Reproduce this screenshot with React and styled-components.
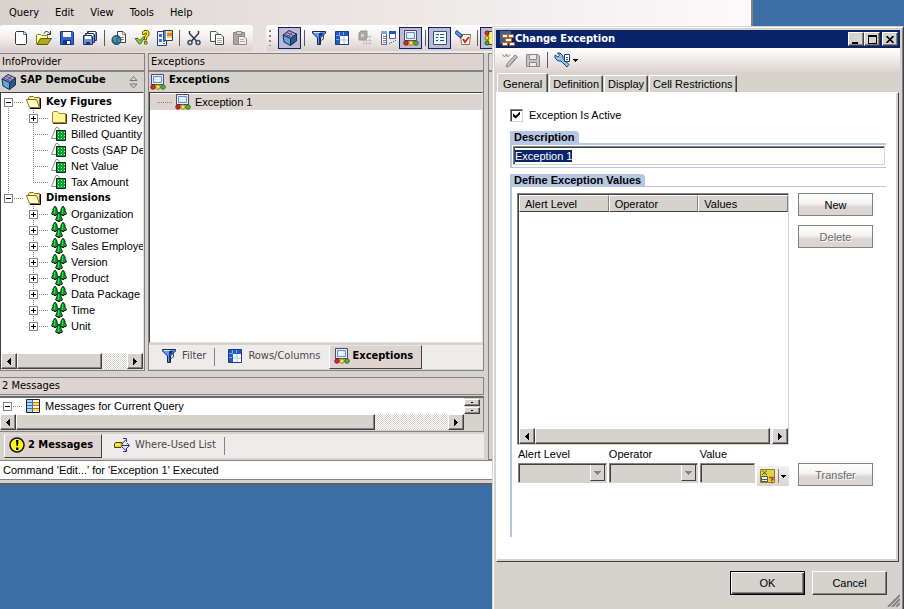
import React, { useEffect, useRef } from 'react';
import styled, { createGlobalStyle, css } from 'styled-components';

const face = '#d6d3ce';
const tint = '#ddd4d1';
const navy = '#0a246a';
const groupBlue = '#b5c7e3';
const sans = '"Liberation Sans", Arial, sans-serif';
const tahoma = '"DejaVu Sans Condensed", "DejaVu Sans", sans-serif';

const GlobalStyle = createGlobalStyle`
  * {
    box-sizing: border-box;
  }

  body {
    margin: 0;
    overflow: hidden;
    background: #3a6ea5;
    color: #000;
    font: 11px/14px ${sans};
  }

  button, input, select {
    margin: 0;
    padding: 0;
    border: 0;
    border-radius: 0;
    background: none;
    color: inherit;
    font: inherit;
  }

  ul {
    margin: 0;
    padding: 0;
    list-style: none;
  }

  svg {
    display: block;
    flex: none;
  }
`;

const raised = css`
  border: 1px solid;
  border-color: #fff #404040 #404040 #fff;
  box-shadow: inset -1px -1px 0 #848284;
`;

const sunken = css`
  border: 1px solid;
  border-color: #848284 #d6d3ce #d6d3ce #848284;
  box-shadow: inset 1px 1px 0 #404040;
`;

const Desktop = styled.div`
  position: relative;
  height: 100vh;
  overflow: hidden;
`;

const MainWindow = styled.div`
  position: absolute;
  top: 0;
  left: 0;
  right: 151px;
  height: calc(100vh - 124px);
  display: flex;
  flex-direction: column;
  background: ${face};
  border-right: 2px solid #848284;
  border-bottom: 2px solid #606060;
`;

const Bars = styled.div`
  background: linear-gradient(to right, #d9d2ce, #fdf9fb 98%);
  padding-bottom: 2px;
`;

const MenuBar = styled.div`
  display: flex;
  gap: 16px;
  padding: 6px 9px 5px;
`;

const MenuButton = styled.button`
  font: 11px/14px ${tahoma};
`;

const ToolRow = styled.div`
  display: flex;
  gap: 13px;
`;

const Strip = styled.div`
  display: flex;
  align-items: center;
  height: 26px;
  padding: 0 2px 0 ${props => (props.$grip ? 0 : 9)}px;
  flex: ${props => (props.$grow ? 1 : 'none')};
  border-radius: 3px;
  background: linear-gradient(to bottom, #fff, #f4f0f0 45%, #d8d0cd);
`;

const Grip = styled.span`
  width: 2px;
  height: 16px;
  margin: 0 7px 0 3px;
  background: repeating-linear-gradient(to bottom, #8a8688 0 2px, transparent 2px 5px);
`;

const ToolButton = styled.button`
  display: flex;
  align-items: center;
  justify-content: center;
  width: 23px;
  height: 22px;
  border: 1px solid ${props => (props.$pressed ? navy : 'transparent')};
  background: ${props => (props.$pressed ? '#bdbad4' : 'none')};
`;

const ToolSeparator = styled.span`
  width: 1px;
  height: 16px;
  margin: 0 2px 0 3px;
  background: #5c5a5c;
`;

const Workspace = styled.div`
  display: flex;
  flex: 1;
  gap: 4px;
  min-height: 0;
`;

const LeftSide = styled.div`
  display: flex;
  flex-direction: column;
  flex: 0 0 484px;
  min-width: 0;
`;

const Panels = styled.div`
  display: flex;
  flex: 1;
  gap: 3px;
  min-height: 0;
`;

const Panel = styled.section`
  display: flex;
  flex-direction: column;
  flex: ${props => (props.$narrow ? '0 0 145px' : 1)};
  min-width: 0;
`;

const PanelCaption = styled.div`
  height: 18px;
  padding: 1px 2px;
  border: 1px solid #848284;
  border-left-width: ${props => (props.$flush ? 0 : 1)}px;
  background: ${tint};
  font: 11px/14px ${tahoma};
`;

const PanelFrame = styled.div`
  display: flex;
  flex-direction: column;
  flex: 1;
  min-height: 0;
  border: 1px solid #848284;
  border-left-width: ${props => (props.$flush ? 0 : 1)}px;
`;

const PanelTitle = styled.h2`
  display: flex;
  align-items: center;
  gap: 3px;
  height: 20px;
  margin: 0;
  padding: 0 6px 0 1px;
  font: bold 11px/14px ${tahoma};

  span {
    flex: 1;
    padding-bottom: 4px;
  }
`;

const Well = styled.div`
  display: flex;
  flex-direction: column;
  flex: 1;
  min-height: 0;
  overflow: hidden;
  background: #fff;
  border: 1px solid;
  border-color: #404040 #e4e1dc #e4e1dc #404040;
`;

const Tree = styled.ul`
  flex: 1;
  overflow: hidden;
  padding-top: 1px;
`;

const TreeRow = styled.li`
  display: flex;
  align-items: center;
  height: 16px;
  padding-left: 3px;
  white-space: nowrap;
  background: ${props => (props.$selected ? tint : 'none')};
`;

const dotsDown = 'repeating-linear-gradient(to bottom, #848284 0 1px, transparent 1px 2px)';
const dotsAcross = 'repeating-linear-gradient(to right, #848284 0 1px, transparent 1px 2px)';

const verticalSize = {
  all: '1px 16px', top: '1px 8px', bottom: '1px 8px', none: '0 0',
};

const Rail = styled.span`
  flex: none;
  width: 25px;
  height: 16px;
  background: ${props => (props.$line ? dotsDown : 'none')} 4px 0 / 1px 16px no-repeat;
`;

const Branch = styled.span`
  display: flex;
  align-items: center;
  flex: none;
  width: 22px;
  height: 16px;
  background-image: ${dotsDown}, ${dotsAcross};
  background-size: ${props => verticalSize[props.$line || 'all']}, 16px 1px;
  background-position: 4px ${props => (props.$line === 'bottom' ? 8 : 0)}px, 4px 8px;
  background-repeat: no-repeat;
`;

const Expander = styled.button`
  display: block;
  width: 9px;
  height: 9px;
  border: 1px solid #848284;
  background:
    linear-gradient(#000, #000) center / 5px 1px no-repeat,
    linear-gradient(#000, #000) center / ${props => (props.$open ? 0 : 1)}px 5px no-repeat,
    #fff;
`;

const TreeText = styled.span`
  margin-left: 4px;
  font: ${props => (props.$strong ? `bold 11px/14px ${tahoma}` : `11px/14px ${sans}`)};
`;

const ScrollTrack = styled.div`
  display: flex;
  flex: none;
  height: 16px;
  background: repeating-conic-gradient(#fff 0 25%, #d6d3ce 0 50%) 0 0 / 2px 2px;
`;

const ScrollButton = styled.button`
  display: flex;
  align-items: center;
  justify-content: center;
  width: 16px;
  height: 16px;
  background: ${face};
  ${raised}
`;

const ScrollThumb = styled.div`
  flex: ${props => props.$size};
  background: ${face};
  ${raised}
`;

const ScrollGap = styled.div`
  flex: ${props => props.$size};
`;

const TabStrip = styled.div`
  display: flex;
  align-items: center;
  height: 24px;
  background: #eeebea;
  margin: ${props => (props.$low ? '2px 0 0 4px' : '2px 0 1px')};
`;

const PanelTab = styled.button`
  display: flex;
  align-items: center;
  gap: ${props => (props.$active ? 3 : 5)}px;
  height: 24px;
  padding: 0 8px 2px ${props => (props.$active ? 4 : 12)}px;
  color: ${props => (props.$active ? '#000' : '#4a4648')};
  font: ${props => (props.$active ? 'bold ' : '')}11px/14px ${tahoma};
  ${props => props.$active && css`
    background: ${tint};
    border: 1px solid;
    border-color: #e9e5e3 #404040 #404040 #fff;
  `}
`;

const TabDivider = styled.span`
  width: 1px;
  height: 18px;
  background: #848284;
`;

const Messages = styled.section`
  margin-top: 6px;
  padding-bottom: 2px;
`;

const MessageWell = styled.div`
  display: flex;
  margin-top: 1px;
  padding: 0 3px 1px 0;
  border: 1px solid #848284;
  border-left: 0;
  border-top: 2px solid #6a686a;
`;

const MessageList = styled.div`
  flex: 1;
  background: #fff;
`;

const Spinner = styled.div`
  display: flex;
  flex-direction: column;
  gap: 1px;
  width: 16px;
  padding-top: 1px;

  button {
    height: 7px;
    background: radial-gradient(#000 1px, transparent 1px), ${face};
    ${raised}
  }
`;

const StatusBar = styled.div`
  height: 20px;
  margin-bottom: 3px;
  padding: 2px 3px;
  border-top: 1px solid #848284;
  border-bottom: 1px solid #848284;
  background: #fff;
  font: 11px/14px ${sans};
`;

const Dialog = styled.div`
  position: absolute;
  top: 26px;
  left: 492px;
  right: 0;
  bottom: 0;
  display: flex;
  flex-direction: column;
  padding: 2px 3px 2px 2px;
  background: ${face};
  border: 1px solid ${face};
  border-right: 1px solid #404040;
  border-bottom: 0;
  box-shadow: inset 1px 1px 0 #fff, inset -1px 0 0 #848284;
`;

const TitleBar = styled.div`
  display: flex;
  align-items: center;
  height: 18px;
  margin: 1px 0 0 1px;
  padding: 0 2px 0 3px;
  background: ${navy};
  color: #fff;
  font: bold 11px/14px ${tahoma};
`;

const DialogTitle = styled.h1`
  flex: 1;
  margin: 0;
  font: inherit;
`;

const CaptionButton = styled.button`
  display: flex;
  align-items: center;
  justify-content: center;
  width: 16px;
  height: 14px;
  margin-left: ${props => (props.$apart ? 2 : 0)}px;
  background: ${face};
  ${raised}
`;

const DialogTools = styled.div`
  display: flex;
  align-items: center;
  height: 24px;
  padding-left: 3px;
  background: linear-gradient(to bottom, #fff, #f2eeee 40%, #dcd4d1);
`;

const DialogTabs = styled.div`
  display: flex;
  align-items: flex-end;
  gap: 1px;
  height: 20px;
  margin-left: 2px;
`;

const DialogTab = styled.button`
  height: ${props => (props.$active ? 20 : 17)}px;
  margin-bottom: ${props => (props.$active ? -1 : 0)}px;
  padding: 0 ${props => (props.$active ? 5 : 3)}px;
  border: 1px solid;
  border-color: #fff #404040 transparent #fff;
  border-bottom: 0;
  border-radius: 2px 2px 0 0;
  box-shadow: inset -1px 0 0 #848284;
  background: ${face};
`;

const Page = styled.div`
  flex: 1;
  margin: 0 1px;
  padding: 14px 12px 24px 13px;
  border: 1px solid;
  border-color: #fff #404040 #404040 #fff;
  box-shadow: inset -2px -2px 0 ${face};
  background: #fff;
  display: flex;
  flex-direction: column;
`;

const CheckLabel = styled.label`
  display: flex;
  align-items: center;
  gap: 6px;
  height: 16px;
`;

const Checkbox = styled.input`
  appearance: none;
  width: 13px;
  height: 13px;
  background: #fff;
  ${sunken}

  &:checked::before {
    content: '';
    display: block;
    width: 7px;
    height: 7px;
    margin: 2px;
    background: #000;
    clip-path: polygon(0 25%, 38% 62%, 100% 0, 100% 42%, 38% 100%, 0 68%);
  }
`;

const Group = styled.section`
  margin-top: ${props => (props.$first ? 8 : 6)}px;
  flex: ${props => (props.$grow ? 1 : 'none')};
  border-left: 2px solid ${groupBlue};
  border-bottom: ${props => (props.$grow ? 0 : 1)}px solid ${groupBlue};
`;

const GroupTitle = styled.h2`
  display: flex;
  margin: 0;
  border-bottom: ${props => (props.$thin ? 1 : 2)}px solid ${groupBlue};
  font: bold 11px/12px ${sans};

  label, span {
    padding: 0 4px 0 2px;
    border-radius: 0 4px 0 0;
    background: ${groupBlue};
  }
`;

const TextInput = styled.input`
  display: block;
  width: calc(100% - 2px);
  height: 19px;
  margin: 1px 0 2px 1px;
  padding: 0 1px;
  background: #fff;
  outline: none;
  ${sunken}

  &::selection {
    background: ${navy};
    color: #fff;
  }
`;

const ValuesLayout = styled.div`
  display: grid;
  grid-template-columns: minmax(0, 1fr) 75px;
  column-gap: 9px;
  padding: 6px 13px 0 5px;
`;

const ValuesBox = styled.div`
  display: flex;
  flex-direction: column;
  height: 252px;
  background: #fff;
  ${sunken}
  padding: 1px 0 0 1px;
`;

const ValuesTable = styled.table`
  width: 100%;
  table-layout: fixed;
  border-spacing: 0;

  th {
    height: 17px;
    padding: 0 5px;
    border: 1px solid;
    border-color: #fff #848284 #404040 #fff;
    background: ${face};
    font-weight: normal;
    text-align: left;
  }
`;

const Filler = styled.div`
  flex: 1;
`;

const SideButtons = styled.div`
  display: flex;
  flex-direction: column;
  gap: 9px;
`;

const FlatButton = styled.button`
  height: 23px;
  border: 1px solid #848284;
  background: linear-gradient(to bottom, #fff, #f6f2f2 45%, #ded6d3 60%, #ddd4d1);

  &:disabled {
    color: #6c686a;
    text-shadow: 1px 1px 0 #fff;
  }
`;

const Fields = styled.div`
  display: flex;
  gap: 2px;
  padding: 2px 0 0 1px;
`;

const Field = styled.div`
  display: flex;
  flex-direction: column;
  gap: 2px;
  flex: ${props => props.$size};
  min-width: 0;
`;

const DisabledBox = styled.span`
  display: flex;
  height: 20px;
  padding: 1px;
  background: ${face};
  ${sunken}

  select, input {
    appearance: none;
    flex: 1;
    min-width: 0;
    width: 0;
  }
`;

const DropCap = styled.span`
  display: flex;
  align-items: center;
  justify-content: center;
  width: 15px;
  border-right: 1px solid #404040;
  border-bottom: 1px solid #404040;
  border-left: 1px solid #fff;
`;

const VariableButton = styled.button`
  display: flex;
  align-items: center;
  justify-content: center;
  gap: 2px;
  align-self: flex-end;
  width: 32px;
  height: 20px;
  background: linear-gradient(to bottom, #f4f0f0, #ddd4d1);
`;

const VariableDivider = styled.span`
  width: 1px;
  height: 14px;
  background: #848284;
`;

const TransferButton = styled(FlatButton)`
  margin-top: 18px;
`;

const Footer = styled.div`
  display: flex;
  justify-content: flex-end;
  gap: 7px;
  padding: 9px 0 12px;
`;

const PushButton = styled.button`
  width: 75px;
  height: 24px;
  background: ${face};
  ${raised}
  ${props => props.$default && css`
    border-color: #000;
    box-shadow: inset 1px 1px 0 #fff, inset -1px -1px 0 #404040, inset -2px -2px 0 #848284;
  `}
`;

const ResizeGrip = styled.span`
  align-self: flex-end;
  margin: 0 0 -12px -7px;
`;

const Icon = ({ children }) => (
  <svg width="16" height="16" viewBox="0 0 16 16" fill="none" aria-hidden="true">
    {children}
  </svg>
);

const NewIcon = () => (
  <Icon>
    <path d="M3.5 1.5H11L13.5 4V13.5L12.5 14.5H3.5L2.5 13.5V2.5Z" fill="#fff" stroke="#333" />
    <path d="M10.500 2V4.500H13" stroke="#777" />
  </Icon>
);

const OpenIcon = () => (
  <Icon>
    <path d="M0.5 14V5L1.5 4.5H5L6 5.5H11.5V8.5" fill="#ffffb0" stroke="#86801c" />
    <path d="M1 14.5L4.5 8.500H15.500L11.500 14.500Z" fill="#b0ab18" stroke="#5c570c" />
    <path d="M8 3.500C9.500 0.500 12 1 14 4M14.500 1V4.500H11" stroke="#333" />
  </Icon>
);

const SaveIcon = () => (
  <Icon>
    <path d="M1.500 1.500H13.500L14.500 2.500V14.500H1.500Z" fill="#2d66da" stroke="#173573" />
    <path d="M4 2H12V7H4Z" fill="#f7fbff" />
    <path d="M4 10H12V14H4Z" fill="#173573" />
    <path d="M8 11H11V14H8Z" fill="#fff" />
  </Icon>
);

const SaveAllIcon = () => (
  <Icon>
    {[[5, 1], [3, 3], [1, 5]].map(([x, y]) => (
      <g key={x} transform={`translate(${x} ${y})`}>
        <path d="M0.500 0.500H8.500L9.500 1.500V9.500H0.500Z" fill="#6f8fd6" stroke="#29315a" />
        <path d="M2 1H8V4H2Z" fill="#fff" />
        <path d="M3 7H7V9H3Z" fill="#29315a" />
      </g>
    ))}
  </Icon>
);

const GlobeIcon = () => (
  <Icon>
    <path d="M6.500 1.500H12L14.500 4V12.500H6.500Z" fill="#fff" stroke="#444" />
    <path d="M11.500 2V4.500H14M10 7.500H13M10 9.500H13" stroke="#888" />
    <circle cx="5.500" cy="10" r="4.500" fill="#2866c8" stroke="#173b73" />
    <path d="M3 7H6V9H5V12H3V10H2V8ZM7 9H9V12H7Z" fill="#49a749" />
  </Icon>
);

const CheckHelpIcon = () => (
  <Icon>
    <path d="M1 8.500H4L6 10.500L9.500 6.500H11.500L6.500 14H5Z" fill="#8bc34a" stroke="#527c18" />
    <path d="M8.500 4.500V2L10 0.500H13.500L15 2V5L12.500 8V10H10.500V7L12.500 4.500V3H11V4.500Z" fill="#ffea00" stroke="#666011" />
    <path d="M10.500 11.500H13V14H10.500Z" fill="#ffea00" stroke="#666011" />
  </Icon>
);

const PropertiesIcon = () => (
  <Icon>
    <path d="M0.500 1.500H9.500V15.500H0.500Z" fill="#eaf6ff" stroke="#27406e" />
    <path d="M2 4H5V7H2ZM2 9H5V12H2ZM6 11H8V12H6ZM6 13H8V14H6Z" fill="#4d6ea8" />
    <path d="M6.500 0.500H15.500V10.500H6.500Z" fill="#fff" stroke="#27406e" />
    <path d="M10 1H15V3H10ZM10 6H15V8H10Z" fill="#ffd23a" />
    <path d="M10 3H15V6H10Z" fill="#df7f45" />
    <path d="M7 1H9V10H7Z" fill="#4d8ce0" />
  </Icon>
);

const CutIcon = () => (
  <Icon>
    <path d="M3.500 1V3.500L10.500 11M12.500 1V3.500L5.500 11" stroke="#333" strokeWidth="1.500" />
    <circle cx="4" cy="12.500" r="2" stroke="#2d4f75" strokeWidth="1.500" />
    <circle cx="12" cy="12.500" r="2" stroke="#2d4f75" strokeWidth="1.500" />
  </Icon>
);

const CopyIcon = () => (
  <Icon>
    <path d="M1.500 1.500H7L9.500 4V11.500H1.500Z" fill="#fff" stroke="#555" />
    <path d="M6.500 4.500H12L14.500 7V14.500H6.500Z" fill="#fff" stroke="#444" />
    <path d="M8 8.500H13M8 10.500H13M8 12.500H13" stroke="#aaa" />
  </Icon>
);

const PasteIcon = () => (
  <Icon>
    <path d="M1.500 2.500H12.500V14.500H1.500Z" fill="#aaa6a8" stroke="#8a868a" />
    <path d="M4.500 1.500H9.500V4.500H4.500Z" fill="#d8d4d4" stroke="#8a868a" />
    <path d="M6.500 6.500H12L14.500 9V14.500H6.500Z" fill="#f2eeee" stroke="#8a868a" />
    <path d="M8 9.500H12M8 11.500H13" stroke="#aaa" />
  </Icon>
);

const CubeIcon = () => (
  <Icon>
    <path d="M1 5L7 0.500L14.500 4L8.500 8.500Z" fill="#b0a6cf" stroke="#26265f" />
    <path d="M1 5L8.500 8.500V15.500L2 12Z" fill="#64a4dc" stroke="#14304e" />
    <path d="M8.500 8.500L14.500 4V11L8.500 15.500Z" fill="#27598f" stroke="#14304e" />
    <path d="M5 2.500L12 6M3 4L10 7.500M5 7L10.500 2.500" stroke="#544b89" />
  </Icon>
);

const FunnelIcon = () => (
  <Icon>
    <path d="M1.500 1.500H14.500V3L9.500 8V14.500H6.500V8L1.500 3Z" fill="#5e9bef" stroke="#17284f" />
    <path d="M8 3H13L9 7V14H8Z" fill="#16339b" />
    <path d="M3 2.500H9" stroke="#d5e9ff" />
    <path d="M10 5.500H12.500V9L10 10.500" stroke="#384a7c" />
  </Icon>
);

const GridIcon = () => (
  <Icon>
    <path d="M1.500 1.500H14.500V14.500H1.500Z" fill="#2458c4" stroke="#1a397d" />
    <path d="M6 6H14V14H6Z" fill="#fff" />
    <path d="M10 6V14M6 10H14" stroke="#a9c6f0" />
    <path d="M2 5.500H6M5.500 2V5M9.500 2V5M2 9.500H5" stroke="#7ca9f0" />
  </Icon>
);

const GrayGridIcon = () => (
  <Icon>
    <path d="M6 6.500H15M6 10.500H15M6 13.500H15M6.500 6V15M9.500 6V15M12.500 6V15" stroke="#c9c5c6" />
    <path d="M2 3L4 1H10V8L8 10H2Z" fill="#aaa7a9" stroke="#98969a" />
    <path d="M4 4H7V7H4Z" fill="#d4d0d2" />
  </Icon>
);

const LayoutIcon = () => (
  <Icon>
    <path d="M1.500 1.500H6.500V14.500H1.500Z" fill="#fff" stroke="#626197" />
    <path d="M1 1H7V4H1Z" fill="#78aae6" />
    <path d="M3 6.500H6M3 8.500H6M3 10.500H6M3 12.500H6" stroke="#7e7cae" />
    <path d="M9.500 1.500H15.500V8.500H9.500Z" fill="#fff" stroke="#526187" />
    <path d="M9 1H16V4H9Z" fill="#2458c4" />
    <path d="M9 13.500H10M11 12.500H12M13 11.500H14M15 10.500H16" stroke="#526187" />
  </Icon>
);

const ExceptionIcon = () => (
  <Icon>
    <path d="M1.500 0.500H13.500V10.500H1.500Z" fill="#efece9" stroke="#4a4a72" />
    <path d="M3.500 2.500H11.500V8.500H3.500Z" fill="#c4e4ff" stroke="#6a8fd6" />
    <path d="M4 4.500H11M4 6.500H11M6.500 3V8M8.500 3V8" stroke="#fff" strokeOpacity="0.700" />
    <circle cx="3" cy="13" r="2.300" fill="#df2424" stroke="#711a18" strokeWidth="0.800" />
    <circle cx="8" cy="13" r="2.300" fill="#ffe52d" stroke="#7e691c" strokeWidth="0.800" />
    <circle cx="13" cy="13" r="2.300" fill="#63ad38" stroke="#245d28" strokeWidth="0.800" />
  </Icon>
);

const ListIcon = () => (
  <Icon>
    <path d="M1.500 1.500H14.500V14.500H1.500Z" fill="#fff" stroke="#31527a" />
    <path d="M3 3H13V13H3Z" fill="#e5f7ff" />
    <path d="M4 4.500H7M8 4.500H12M4 7.500H6M8 7.500H12M4 10.500H6M8 10.500H12" stroke="#31527a" />
  </Icon>
);

const CheckSheetIcon = () => (
  <Icon>
    <path d="M5.500 4.500H15.500L14.500 14.500H6.500Z" fill="#fff" stroke="#8b7733" />
    <path d="M8 9L10 12L14 7" stroke="#dd2525" strokeWidth="2" />
    <path d="M0.500 1.500L7 7" stroke="#244574" strokeWidth="4" />
    <path d="M1 2L6 6" stroke="#5da3ee" strokeWidth="2" />
  </Icon>
);

const LightsIcon = () => (
  <Icon>
    <path d="M4 1.500H15V14.500H4Z" fill="#ffee70" stroke="#444" />
    <path d="M8 4.500H13M8 8.500H13M8 12.500H13" stroke="#444" />
    <circle cx="3" cy="3" r="2" fill="#df3028" stroke="#7b1717" />
    <circle cx="3" cy="8" r="2" fill="#ffdf1c" stroke="#78691e" />
    <circle cx="3" cy="13" r="2" fill="#50a83d" stroke="#245d28" />
  </Icon>
);

const FolderIcon = ({ open }) => (open ? (
  <Icon>
    <path d="M2.500 6V3.500L3.500 2.500H7.500L8.500 3.500H13.500V13" fill="#ffef9c" stroke="#8c6c18" />
    <path d="M0.500 5.500H10.500L13.500 13.500H3.500Z" fill="#ffffce" stroke="#8c6c18" />
    <path d="M14.500 4V14.500H4" stroke="#000" />
  </Icon>
) : (
  <Icon>
    <path d="M1.500 4V3L2.500 1.500H6.500L8 3.500H14.500V12.500H1.500Z" fill="#fff59c" stroke="#a8842c" />
    <path d="M2 13.500H15.500V4" stroke="#4a3408" />
  </Icon>
));

const KeyFigureIcon = () => (
  <Icon>
    <path d="M5 12.500H0.500L5 1.500H7L8.500 4" stroke="#8c8a8c" />
    <path d="M5.500 4.500H14.500V14.500H5.500Z" fill="#09a72d" stroke="#002b0b" />
    <path d="M7 6.500H14M7 9.500H14M7 12.500H14" stroke="#b8ffbe" strokeDasharray="1 2" />
  </Icon>
);

const DimensionIcon = () => (
  <Icon>
    {[[0, 0], [8, 0], [4, 6]].map(([x, y]) => (
      <g key={`${x}-${y}`} transform={`translate(${x} ${y})`}>
        <path
          d="M3.500 0.500H4.500L6 3V5L7.500 7.500L7 8.500H5V9.500H3V8.500H1L0.500 7.500L2 5V3Z"
          fill="#0c9a36"
          stroke="#05290e"
        />
        <path d="M3.500 2V7.500" stroke="#2ef02e" />
      </g>
    ))}
  </Icon>
);

const SortIcon = () => (
  <svg width="9" height="14" viewBox="0 0 9 14" fill="none" aria-hidden="true">
    <path d="M1 5.500L4.500 1.500L8 5.500ZM1 9L4.500 13L8 9Z" stroke="#777" />
  </svg>
);

const MessageGridIcon = () => (
  <Icon>
    <path d="M1.500 1.500H14.500V14.500H1.500Z" fill="#fff" stroke="#222" />
    <path d="M2 2H7V14H2Z" fill="#a4d8ff" />
    <path d="M8 5H14V7H8ZM8 11H14V13H8Z" fill="#ffe52d" />
    <path d="M7 4.500H14M7 7.500H14M7 10.500H14" stroke="#d66b3a" />
    <path d="M2 4.500H7M2 7.500H7M2 10.500H7M7.500 2V14" stroke="#3572b4" />
  </Icon>
);

const WarningIcon = () => (
  <Icon>
    <circle cx="8" cy="8" r="7" fill="#fff719" stroke="#111" strokeWidth="1.500" />
    <path d="M7 3H9.500L9 9H7.500ZM7 10.500H9.500V13H7Z" fill="#000" />
  </Icon>
);

const WhereUsedIcon = () => (
  <svg width="16" height="16" viewBox="0 0 16 16" fill="none" aria-hidden="true">
    <path d="M8 8.500H15M8 7L12 2.500M8 10L12 13.500M9 1.500H12.500V5M9 14.500H12.500V11M13 6L15.500 8.500L13 11" stroke="#392da5" />
    <path d="M0.500 6.500L2 5.500H8V9L7 10.500H0.500Z" fill="#e9d91c" stroke="#4b4308" />
    <path d="M1 7.500H6" stroke="#fff982" />
  </svg>
);

const DialogIcon = () => (
  <Icon>
    <path d="M1 0H12V13H1Z" fill="#42608f" />
    <path d="M3.500 3.500H8.500V6.500H3.500ZM9.500 3.500H14.500V6.500H9.500ZM6.500 7.500H12.500V10.500H6.500ZM3.500 11.500H8.500V14.500H3.500ZM10.500 11.500H15.500V14.500H10.500Z" fill="#fffce7" stroke="#b1622c" />
  </Icon>
);

const PencilIcon = () => (
  <Icon>
    <path d="M5 12L13 3L15.500 5L7.500 14L4.500 15Z" fill="#c9c5c5" stroke="#858183" />
    <path d="M0.500 2.500L2.500 5L4.500 2L5.500 5L8 2.500M8 13L14 6" stroke="#858183" />
  </Icon>
);

const GraySaveIcon = () => (
  <Icon>
    <path d="M1.500 2.500H13L14.500 4V14.500H1.500Z" fill="#c6c2c2" stroke="#8c888b" />
    <path d="M4.500 3V7.500H11.500V3M4.500 14V10.500H11.500V14" fill="#ece8e8" stroke="#8c888b" />
  </Icon>
);

const WrenchIcon = () => (
  <Icon>
    <path d="M1 3L4 5L5.500 3.500L3.500 1H6L9 4V6.500L15 12.500L13 15L7 9H4L1 6Z" fill="#8dc1f0" stroke="#20436e" />
    <path d="M10.500 2.500H15.500V9.500H10.500Z" fill="#fff" stroke="#303a6e" />
    <path d="M12 5.500H14M12 7.500H14" stroke="#20436e" />
  </Icon>
);

const VariableIcon = () => (
  <Icon>
    <path d="M0 1H15V15H0Z" fill="#ded642" />
    <path d="M0.500 1.500H14.500V14.500H0.500Z" stroke="#85822c" />
    <path d="M2 2.500L7 7M7 2.500L2 7" stroke="#565020" />
    <path d="M1.500 8.500H7.500V13.500H1.500Z" fill="#fff" stroke="#555" />
    <path d="M2 11.500H7" stroke="#555" />
    <path d="M9 9.500H13V11.500H11.500V13M11 14.500H13" stroke="#d53b27" strokeWidth="1.500" />
  </Icon>
);

const DownArrow = ({ color = '#000' }) => (
  <svg width="7" height="4" viewBox="0 0 7 4" shapeRendering="crispEdges" aria-hidden="true">
    <path d="M0 0H7L3.500 4Z" fill={color} />
  </svg>
);

const SmallArrow = () => (
  <svg width="5" height="3" viewBox="0 0 5 3" shapeRendering="crispEdges" aria-hidden="true">
    <path d="M0 0H5L2.500 3Z" fill="#000" />
  </svg>
);

const SideArrow = ({ right }) => (
  <svg width="4" height="7" viewBox="0 0 4 7" shapeRendering="crispEdges" aria-hidden="true">
    <path d={right ? 'M0 0V7L4 3.500Z' : 'M4 0V7L0 3.500Z'} fill="#000" />
  </svg>
);

const HorizontalScroll = ({ thumb, rest }) => (
  <ScrollTrack>
    <ScrollButton aria-label="Scroll left"><SideArrow /></ScrollButton>
    <ScrollThumb $size={thumb} />
    <ScrollGap $size={rest} />
    <ScrollButton aria-label="Scroll right"><SideArrow right /></ScrollButton>
  </ScrollTrack>
);

const fileTools = [
  ['New', NewIcon], ['Open', OpenIcon], ['Save', SaveIcon], ['Save All', SaveAllIcon], null,
  ['Publish', GlobeIcon], ['Check', CheckHelpIcon], ['Query Properties', PropertiesIcon], null,
  ['Cut', CutIcon], ['Copy', CopyIcon], ['Paste', PasteIcon],
];

const viewTools = [
  ['InfoProvider', CubeIcon, true], null,
  ['Filter', FunnelIcon], ['Rows/Columns', GridIcon], ['Cells', GrayGridIcon],
  ['Conditions', LayoutIcon], ['Exceptions', ExceptionIcon, true], null,
  ['Properties', ListIcon, true], ['Tasks', CheckSheetIcon], null,
  ['Messages', LightsIcon, true],
];

const keyFigures = ['Restricted Key', 'Billed Quantity', 'Costs (SAP De', 'Net Value', 'Tax Amount'];

const dimensions = [
  'Organization', 'Customer', 'Sales Employe', 'Version', 'Product', 'Data Package', 'Time', 'Unit',
];

const Tools = ({ items }) => items.map((item, index) => {
  if (!item) {
    return <ToolSeparator key={index} />;
  }
  const [name, Glyph, pressed] = item;
  return <ToolButton key={name} aria-label={name} $pressed={pressed}><Glyph /></ToolButton>;
});

const ProviderTree = () => (
  <Tree>
    <TreeRow>
      <Branch $line="bottom"><Expander aria-label="Collapse" $open /></Branch>
      <FolderIcon open />
      <TreeText $strong>Key Figures</TreeText>
    </TreeRow>
    {keyFigures.map((name, index) => (
      <TreeRow key={name}>
        <Rail $line />
        <Branch $line={index === keyFigures.length - 1 ? 'top' : 'all'}>
          {index === 0 && <Expander aria-label="Expand" />}
        </Branch>
        {index === 0 ? <FolderIcon /> : <KeyFigureIcon />}
        <TreeText>{ name }</TreeText>
      </TreeRow>
    ))}
    <TreeRow>
      <Branch $line="top"><Expander aria-label="Collapse" $open /></Branch>
      <FolderIcon open />
      <TreeText $strong>Dimensions</TreeText>
    </TreeRow>
    {dimensions.map((name, index) => (
      <TreeRow key={name}>
        <Rail />
        <Branch $line={index === dimensions.length - 1 ? 'top' : 'all'}>
          <Expander aria-label="Expand" />
        </Branch>
        <DimensionIcon />
        <TreeText>{ name }</TreeText>
      </TreeRow>
    ))}
  </Tree>
);

const QueryDesigner = () => (
  <MainWindow>
    <Bars>
      <MenuBar>
        {['Query', 'Edit', 'View', 'Tools', 'Help'].map(name => (
          <MenuButton key={name}>{ name }</MenuButton>
        ))}
      </MenuBar>
      <ToolRow>
        <Strip><Tools items={fileTools} /></Strip>
        <Strip $grip $grow><Grip /><Tools items={viewTools} /></Strip>
      </ToolRow>
    </Bars>
    <Workspace>
      <LeftSide>
        <Panels>
          <Panel $narrow>
            <PanelCaption $flush>InfoProvider</PanelCaption>
            <PanelFrame $flush>
              <PanelTitle><CubeIcon /><span>SAP DemoCube</span><SortIcon /></PanelTitle>
              <Well>
                <ProviderTree />
                <HorizontalScroll thumb={83} rest={25} />
              </Well>
            </PanelFrame>
          </Panel>
          <Panel>
            <PanelCaption>Exceptions</PanelCaption>
            <PanelFrame>
              <PanelTitle><ExceptionIcon /><span>Exceptions</span></PanelTitle>
              <Well>
                <Tree>
                  <TreeRow $selected>
                    <Branch $line="none" />
                    <ExceptionIcon />
                    <TreeText>Exception 1</TreeText>
                  </TreeRow>
                </Tree>
              </Well>
              <TabStrip>
                <PanelTab><FunnelIcon />Filter</PanelTab>
                <TabDivider />
                <PanelTab><GridIcon />Rows/Columns</PanelTab>
                <PanelTab $active><ExceptionIcon />Exceptions</PanelTab>
              </TabStrip>
            </PanelFrame>
          </Panel>
        </Panels>
        <Messages>
          <PanelCaption $flush>2 Messages</PanelCaption>
          <MessageWell>
            <MessageList>
              <TreeRow as="div">
                <Branch $line="none"><Expander aria-label="Collapse" $open /></Branch>
                <MessageGridIcon />
                <TreeText>Messages for Current Query</TreeText>
              </TreeRow>
              <HorizontalScroll thumb={359} rest={73} />
            </MessageList>
            <Spinner>
              <button aria-label="Previous message" />
              <button aria-label="Next message" />
            </Spinner>
          </MessageWell>
          <TabStrip $low>
            <PanelTab $active><WarningIcon />2 Messages</PanelTab>
            <PanelTab><WhereUsedIcon />Where-Used List</PanelTab>
            <TabDivider />
          </TabStrip>
        </Messages>
      </LeftSide>
      <Panel>
        <PanelCaption />
        <PanelFrame />
      </Panel>
    </Workspace>
    <StatusBar>Command &apos;Edit...&apos; for &apos;Exception 1&apos; Executed</StatusBar>
  </MainWindow>
);

const ExceptionDialog = () => {
  const description = useRef(null);

  useEffect(() => {
    description.current.focus();
    description.current.select();
  }, []);

  return (
    <Dialog role="dialog" aria-labelledby="dialog-title">
      <TitleBar>
        <DialogIcon />
        <DialogTitle id="dialog-title">Change Exception</DialogTitle>
        <CaptionButton aria-label="Minimize">
          <svg width="10" height="9" viewBox="0 0 10 9"><path d="M1 7H7V9H1Z" /></svg>
        </CaptionButton>
        <CaptionButton aria-label="Maximize">
          <svg width="9" height="9" viewBox="0 0 9 9"><path d="M0 0H9V9H0ZM1 2V8H8V2Z" fillRule="evenodd" /></svg>
        </CaptionButton>
        <CaptionButton aria-label="Close" $apart>
          <svg width="8" height="7" viewBox="0 0 8 7"><path d="M0.500 0L7.500 7M7.500 0L0.500 7" stroke="#000" strokeWidth="1.600" /></svg>
        </CaptionButton>
      </TitleBar>
      <DialogTools>
        <ToolButton aria-label="Edit" disabled><PencilIcon /></ToolButton>
        <ToolButton aria-label="Save" disabled><GraySaveIcon /></ToolButton>
        <ToolSeparator />
        <ToolButton aria-label="Settings"><WrenchIcon /></ToolButton>
        <SmallArrow />
      </DialogTools>
      <DialogTabs role="tablist">
        {['General', 'Definition', 'Display', 'Cell Restrictions'].map((name, index) => (
          <DialogTab key={name} role="tab" aria-selected={index === 0} $active={index === 0}>
            { name }
          </DialogTab>
        ))}
      </DialogTabs>
      <Page>
        <CheckLabel>
          <Checkbox type="checkbox" defaultChecked />
          Exception Is Active
        </CheckLabel>
        <Group $first>
          <GroupTitle><label htmlFor="description">Description</label></GroupTitle>
          <TextInput id="description" ref={description} defaultValue="Exception 1" />
        </Group>
        <Group $grow>
          <GroupTitle $thin><span>Define Exception Values</span></GroupTitle>
          <ValuesLayout>
            <ValuesBox>
              <ValuesTable>
                <thead>
                  <tr>
                    <th>Alert Level</th>
                    <th>Operator</th>
                    <th>Values</th>
                  </tr>
                </thead>
              </ValuesTable>
              <Filler />
              <HorizontalScroll thumb={236} rest={2} />
            </ValuesBox>
            <SideButtons>
              <FlatButton>New</FlatButton>
              <FlatButton disabled>Delete</FlatButton>
            </SideButtons>
            <Fields>
              <Field $size={90}>
                <label htmlFor="alert-level">Alert Level</label>
                <DisabledBox>
                  <select id="alert-level" disabled />
                  <DropCap><DownArrow color="#848284" /></DropCap>
                </DisabledBox>
              </Field>
              <Field $size={90}>
                <label htmlFor="operator">Operator</label>
                <DisabledBox>
                  <select id="operator" disabled />
                  <DropCap><DownArrow color="#848284" /></DropCap>
                </DisabledBox>
              </Field>
              <Field $size={56}>
                <label htmlFor="value">Value</label>
                <DisabledBox><input id="value" disabled /></DisabledBox>
              </Field>
              <VariableButton aria-label="Variable">
                <VariableIcon />
                <VariableDivider />
                <SmallArrow />
              </VariableButton>
            </Fields>
            <TransferButton disabled>Transfer</TransferButton>
          </ValuesLayout>
        </Group>
      </Page>
      <Footer>
        <PushButton $default>OK</PushButton>
        <PushButton>Cancel</PushButton>
        <ResizeGrip>
          <svg width="13" height="13" viewBox="0 0 13 13" aria-hidden="true">
            <path d="M1 13L13 1M5 13L13 5M9 13L13 9" stroke="#848284" strokeWidth="2" />
          </svg>
        </ResizeGrip>
      </Footer>
    </Dialog>
  );
};

const App = () => (
  <Desktop>
    <GlobalStyle />
    <QueryDesigner />
    <ExceptionDialog />
  </Desktop>
);

export default App;
